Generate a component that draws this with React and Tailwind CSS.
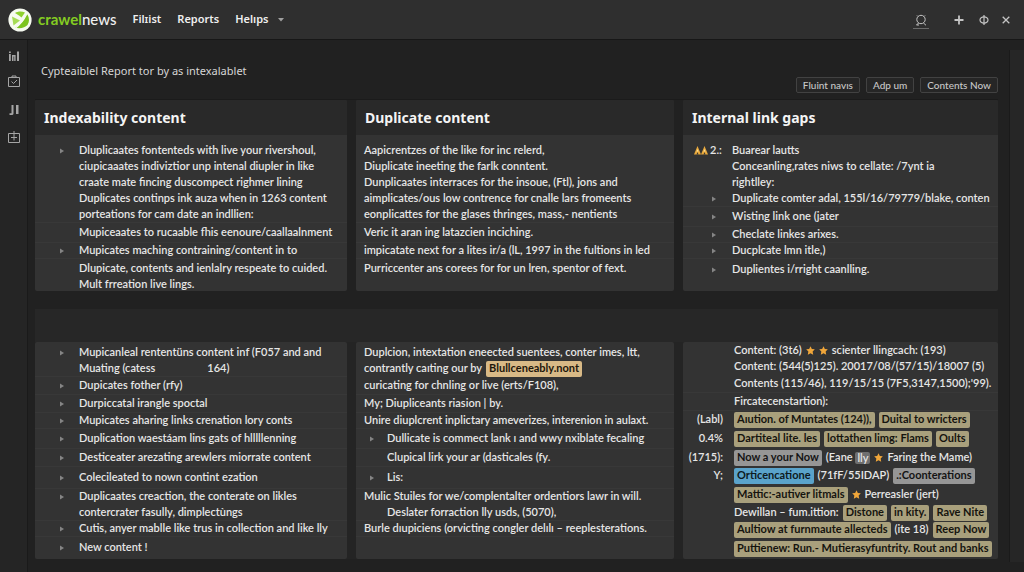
// src/App.jsx
import clsx from 'clsx';

const ROW_HEIGHT = {
  xs: 'h-3',
  sm: 'h-4',
  md: 'h-[18px]',
  lg: 'h-5',
  xl: 'h-[22px]',
};

const TAG_COLOR = {
  sand: 'bg-[#a9a07c] text-[#15140f]',
  amber: 'bg-[#d8b986] text-[#1d160b]',
  gray: 'bg-[#969696] text-[#141414]',
  blue: 'bg-[#5aa3cb] text-[#0d1a22]',
};

function Logo() {
  return (
    <svg viewBox="0 0 24 24" className="size-6 shrink-0" aria-hidden="true">
      <circle cx="12" cy="12" r="11.6" fill="#f6faf0" />
      <path d="M7 5C10 3 14 3 17 4.500L13.500 9.500 11 7.500z" fill="#8ed12f" />
      <path d="M17.500 8L19.500 6.500c2 3.500 2 7.500 0 10.500-2.500 3-8 4-12.500 2.500 4.500-2 8.500-6 10.500-11.500z" fill="#7cc41f" />
      <path d="M4 8.500l8 4-6.500 5z" fill="#a5dc55" />
      <path d="M7.500 20c4-3 8-7 11-13.500" fill="none" stroke="#f6faf0" strokeWidth="1.2" />
    </svg>
  );
}

function Arrow() {
  return (
    <svg viewBox="0 0 4 6" className="h-1.5 w-1 shrink-0" aria-hidden="true">
      <path d="M0 0.5L4 3 0 5.5z" fill="#858585" />
    </svg>
  );
}

function Star() {
  return (
    <svg viewBox="0 0 10 10" className="size-[9px] shrink-0" aria-hidden="true">
      <path d="M5 0.2l1.500 3 3.300.5-2.400 2.400.6 3.500L5 8 2 9.600l.6-3.500L.2 3.700l3.300-.5z" fill="#f0a63a" />
    </svg>
  );
}

function Flame() {
  return (
    <svg viewBox="0 0 7 9" className="h-[9px] w-[7px]" aria-hidden="true">
      <path d="M3.5 0L7 8.5H0z" fill="#e9a93c" />
      <path d="M3.5 3l1 2.500h-2z" fill="#fbe3a0" />
      <path d="M3.5 6l1 2.500h-2z" fill="#333333" />
    </svg>
  );
}

function Tag({ color = 'sand', children }) {
  return (
    <span className={clsx('flex h-4 items-center rounded-xs px-[3px] font-bold', TAG_COLOR[color])}>
      {children}
    </span>
  );
}

const indexRows = [
  { h: 'sm', text: 'Dluplicaates fontenteds with live your rivershoul,', arrow: true },
  { h: 'sm', text: 'ciupicaaates indiviztior unp intenal diupler in like' },
  { h: 'sm', text: 'craate mate fincing duscompect righmer lining' },
  { h: 'sm', text: 'Duplicates continps ink auza when in 1263 content' },
  { h: 'sm', text: 'porteations for cam date an indllien:', line: true },
  { h: 'lg', text: 'Mupiceaates to rucaable fhis eenoure/caallaalnment', line: true },
  { h: 'sm', text: 'Mupicates maching contraining/content in to', arrow: true, line: true },
  { h: 'lg', text: 'Dlupicate, contents and ienlalry respeate to cuided.' },
  { h: 'xs', text: 'Mult frreation live lings.' },
];

const duplicateRows = [
  { h: 'sm', text: 'Aapicrentzes of the like for inc relerd,' },
  { h: 'sm', text: 'Diuplicate ineeting the farlk conntent.' },
  { h: 'sm', text: 'Dunplicaates interraces for the insoue, (Ftl), jons and' },
  { h: 'sm', text: 'aimplicates/ous low contrence for cnalle lars fromeents' },
  { h: 'sm', text: 'eonplicattes for the glases thringes, mass,- nentients', line: true },
  { h: 'lg', text: 'Veric it aran ing latazcien inciching.', line: true },
  { h: 'sm', text: 'impicatate next for a lites ir/a (lL, 1997 in the fultions in led', line: true },
  { h: 'lg', text: 'Purriccenter ans corees for for un lren, spentor of fext.' },
];

const linkRows = [
  { h: 'sm', text: 'Buarear lautts', warn: true },
  { h: 'sm', text: 'Conceanling,rates niws to cellate: /7ynt ia' },
  { h: 'sm', text: 'rightlley:' },
  { h: 'sm', text: 'Duplicate comter adal, 155l/16/79779/blake, conten', arrow: true, line: true },
  { h: 'lg', text: 'Wisting link one (jater', arrow: true, line: true },
  { h: 'sm', text: 'Checlate linkes arixes.', arrow: true, line: true },
  { h: 'sm', text: 'Ducplcate lmn itle,)', arrow: true, line: true },
  { h: 'xl', text: 'Duplientes i/rright caanlling.', arrow: true },
];

const contentRows = [
  { h: 'sm', text: 'Mupicanleal rententüns content inf (F057 and and', arrow: true },
  { h: 'sm', text: 'Muating (catess', extra: '164)', line: true },
  { h: 'md', text: 'Dupicates fother (rfy)', arrow: true, line: true },
  { h: 'md', text: 'Durpiccatal irangle spoctal', arrow: true, line: true },
  { h: 'sm', text: 'Mupicates aharing links crenation lory conts', arrow: true, line: true },
  { h: 'lg', text: 'Duplication waestáam lins gats of hlllllenning', arrow: true, line: true },
  { h: 'md', text: 'Desticeater arezating arewlers miorrate content', arrow: true, line: true },
  { h: 'xl', text: 'Colecileated to nown contint ezation', arrow: true, line: true },
  { h: 'sm', text: 'Duplicaates creaction, the conterate on likles', arrow: true },
  { h: 'sm', text: 'contercrater fasully, dimplectùngs', line: true },
  { h: 'sm', text: 'Cutis, anyer mablle like trus in collection and like lly', arrow: true, line: true },
  { h: 'xl', text: 'New content !', arrow: true },
];

const detailRows = [
  { h: 'sm', text: 'Duplcion, intextation eneected suentees, conter imes, ltt,' },
  { h: 'sm', text: 'contrantly caıting our by', tag: 'Blullceneably.nont' },
  { h: 'md', text: 'curicating for chnling or live (erts/F108),', line: true },
  { h: 'md', text: 'My; Diupliceants riasion | by.', line: true },
  { h: 'sm', text: 'Unire diuplcrent inplictary ameverizes, interenion in aulaxt.', line: true },
  { h: 'lg', text: 'Dullicate is commect lank ı and wwy nxiblate fecaling', arrow: true, line: true },
  { h: 'md', text: 'Clupical lirk your ar (dasticales (fy.', indent: true, line: true },
  { h: 'xl', text: 'Lis:', arrow: true, line: true },
  { h: 'sm', text: 'Mulic Stuiles for we/complentalter ordentiors lawr in will.' },
  { h: 'sm', text: 'Deslater forraction lly usds, (5070),', indent: true, line: true },
  { h: 'sm', text: 'Burle dıupiciens (orvicting congler delılı – reeplesterations.', line: true },
];

function Row({ h, line, className, children }) {
  return (
    <li
      className={clsx(
        'flex items-center whitespace-nowrap border-b',
        line ? 'border-[#383838]' : 'border-transparent',
        ROW_HEIGHT[h],
        className,
      )}
    >
      {children}
    </li>
  );
}

// Rows with a left gutter that holds the expand arrow
function BulletList({ rows }) {
  return (
    <ul>
      {rows.map((row) => (
        <Row key={row.text} h={row.h} line={row.line}>
          <span className="flex w-11 shrink-0 pl-[25px]">{row.arrow && <Arrow />}</span>
          <span>{row.text}</span>
          {row.extra && <span className="pl-13">{row.extra}</span>}
        </Row>
      ))}
    </ul>
  );
}

function TextList({ rows }) {
  return (
    <ul>
      {rows.map((row) => (
        <Row key={row.text} h={row.h} line={row.line} className="pl-2">
          {(row.arrow || row.indent) && (
            <span className="flex w-[23px] shrink-0 pl-1.5">{row.arrow && <Arrow />}</span>
          )}
          <span>{row.text}</span>
          {row.tag && (
            <span className="pl-1">
              <Tag color="amber">{row.tag}</Tag>
            </span>
          )}
        </Row>
      ))}
    </ul>
  );
}

function LinkList({ rows }) {
  return (
    <ul>
      {rows.map((row) => (
        <Row key={row.text} h={row.h} line={row.line}>
          <span className="flex w-[49px] shrink-0 items-center pl-[11px]">
            {row.warn && (
              <>
                <Flame />
                <Flame />
                <span className="pl-0.5">2.:</span>
              </>
            )}
            {row.arrow && <span className="pl-[18px]"><Arrow /></span>}
          </span>
          <span>{row.text}</span>
        </Row>
      ))}
    </ul>
  );
}

function MetricRow({ h, label, line, children }) {
  return (
    <Row h={h} line={line}>
      <span className="w-11 shrink-0 pr-1 text-right">{label}</span>
      <span className="flex items-center gap-1 pl-[7px]">{children}</span>
    </Row>
  );
}

function MetricList() {
  return (
    <ul>
      <MetricRow h="sm">
        <span>Content: (3t6)</span>
        <Star />
        <Star />
        <span>scienter llingcach: (193)</span>
      </MetricRow>
      <MetricRow h="sm">Content: (544(5)125). 20017/08/(57/15)/18007 (5)</MetricRow>
      <MetricRow h="md" line>Contents (115/46), 119/15/15 (7F5,3147,1500);'99).</MetricRow>
      <MetricRow h="md" line>Fircatecenstartion):</MetricRow>
      <MetricRow h="md" label="(Labl)">
        <Tag>Aıution. of Muntates (124)),</Tag>
        <Tag>Duital to wricters</Tag>
      </MetricRow>
      <MetricRow h="lg" label="0.4%">
        <Tag>Dartiteal lite. les</Tag>
        <Tag>lottathen limg: Flams</Tag>
        <Tag>Oults</Tag>
      </MetricRow>
      <MetricRow h="md" label="(1715):">
        <Tag color="gray">Now a your Now</Tag>
        <span className="flex items-center">
          (Eane&nbsp;
          <span className="rounded-xs bg-[#6f6f6f] px-0.5 leading-3">lly</span>
        </span>
        <Star />
        <span>Faring the Mame)</span>
      </MetricRow>
      <MetricRow h="md" label="Y;">
        <Tag color="blue">Orticencatione</Tag>
        <span>(71fF/55IDAP)</span>
        <Tag color="gray">.:Coonterations</Tag>
      </MetricRow>
      <MetricRow h="lg">
        <Tag>Mattic:-autiver litmals</Tag>
        <Star />
        <span>Perreasler (jert)</span>
      </MetricRow>
      <MetricRow h="sm">
        <span>Dewillan – fum.ittion:</span>
        <Tag>Distone</Tag>
        <Tag>in kity.</Tag>
        <Tag>Rave Nite</Tag>
      </MetricRow>
      <MetricRow h="md">
        <Tag>Aultiow at furnmaute allecteds</Tag>
        <span>(ite 18)</span>
        <Tag>Reep Now</Tag>
      </MetricRow>
      <MetricRow h="lg">
        <Tag>Puttienew: Run.- Mutierasyfuntrity. Rout and banks</Tag>
      </MetricRow>
    </ul>
  );
}

function Card({ title, children }) {
  return (
    <section className="flex min-w-0 flex-col overflow-hidden rounded-xs bg-[#333333]">
      <h2 className="flex h-[35px] items-center bg-[#292929] px-[9px] font-['Noto_Sans',sans-serif] text-sm font-bold text-[#f4f4f4]">
        {title}
      </h2>
      <div className="pt-2">{children}</div>
    </section>
  );
}

function Header() {
  return (
    <header className="flex h-10 items-center border-b border-[#171717] bg-[#2f2f2f] px-2">
      <a href="#home" className="flex items-center gap-1.5">
        <Logo />
        <span className="text-[15px] font-medium text-[#f0f0f0]">
          <span className="font-bold text-[#84cc22]">crawel</span>news
        </span>
      </a>
      <nav className="flex items-center gap-4 pl-4 font-['Noto_Sans',sans-serif] text-[11px] font-semibold text-[#efefef]">
        <a href="#filter">Filɪist</a>
        <a href="#reports">Reports</a>
        <button type="button" className="flex items-center gap-2.5">
          Helıps
          <svg viewBox="0 0 6 4" className="h-1 w-1.5" aria-hidden="true">
            <path d="M0 0h6L3 3.5z" fill="#a0a0a0" />
          </svg>
        </button>
      </nav>
      <div className="ml-auto flex items-center pr-1.5 text-[#c4c4c4]">
        <button type="button" aria-label="Search" className="flex w-4 justify-center border-b border-[#6b6b6b] pt-1 pb-0.5">
          <svg viewBox="0 0 12 12" className="size-3" fill="none" stroke="currentColor">
            <circle cx="6" cy="5.5" r="4.2" />
            <path d="M3.5 9L1.500 11h2.500M8.500 9l2.500 2.300M3 2.500L2 1.500M9 2.500l1-1" />
          </svg>
        </button>
        <button type="button" aria-label="Add" className="ml-[25px]">
          <svg viewBox="0 0 10 10" className="size-2.5" fill="none" stroke="currentColor" strokeWidth="1.8">
            <path d="M5 0.5v9M0.5 5h9" />
          </svg>
        </button>
        <button type="button" aria-label="Power" className="ml-[15px]">
          <svg viewBox="0 0 10 10" className="size-2.5" fill="none" stroke="currentColor" strokeWidth="1.2">
            <ellipse cx="5" cy="5" rx="4" ry="3.2" />
            <path d="M5 0v10" />
          </svg>
        </button>
        <button type="button" aria-label="Close" className="ml-[13px]">
          <svg viewBox="0 0 8 8" className="size-2" fill="none" stroke="currentColor" strokeWidth="1.3">
            <path d="M0.7 0.7l6.600 6.600M7.300 0.7L0.7 7.300" />
          </svg>
        </button>
      </div>
    </header>
  );
}

function Sidebar() {
  return (
    <nav className="flex w-7 shrink-0 flex-col items-center gap-[13px] border-r border-[#1a1a1a] bg-[#252525] pt-2.5 text-[#a5a5a5]">
      <button type="button" aria-label="Statistics">
        <svg viewBox="0 0 12 12" className="size-3" fill="currentColor">
          <path d="M1 4h1.800v7H1zM1 1.500h1.800v1.500H1zM4 5h3.600v6H6.200V6.500h-.7V11H4zM9 1.500h2V11H9z" />
        </svg>
      </button>
      <button type="button" aria-label="Tasks">
        <svg viewBox="0 0 12 12" className="size-3" fill="none" stroke="currentColor">
          <path d="M.5 2.500h11v9H.5zM4 2.500V1h4v1.500M3.500 6.500l2 2 3.500-3.500" />
        </svg>
      </button>
      <button type="button" aria-label="Compare" className="pt-1">
        <svg viewBox="0 0 12 12" className="size-3" fill="currentColor">
          <path d="M3.500 1h2v8.500c0 1-.8 1.500-2.500 1.500H1.500V9.300h2zM8 1h2.500v9H8z" />
        </svg>
      </button>
      <button type="button" aria-label="Add panel" className="pt-0.5">
        <svg viewBox="0 0 12 12" className="size-3" fill="none" stroke="currentColor">
          <path d="M.5 2.500h11v9H.5zM6 0v9.500M3 6.500h6" />
        </svg>
      </button>
    </nav>
  );
}

const actions = ['Fluint navıs', 'Adp um', 'Contents Now'];

export default function App() {
  return (
    <div className="flex min-h-screen flex-col bg-[#212121] font-['Lato',sans-serif] text-[11px] font-semibold text-[#e6e6e6]">
      <Header />
      <div className="flex flex-1">
        <Sidebar />
        <main className="min-w-0 flex-1 px-[7px] pb-3">
          <div className="flex h-[60px] items-end justify-between border-b border-[#1b1b1b] pl-1.5">
            <h1 className="self-center pt-1 font-['Noto_Sans',sans-serif] text-[11px] font-normal text-[#d6d6d6]">
              Cypteaiblel Report tor by as intexalablet
            </h1>
            <div className="flex gap-1.5 pb-1.5">
              {actions.map((label) => (
                <button
                  key={label}
                  type="button"
                  className="h-4 rounded-xs border border-[#424242] bg-[#262626] px-1.5 text-[10px] leading-3 font-medium text-[#c8c8c8]"
                >
                  {label}
                </button>
              ))}
            </div>
          </div>

          <div className="grid grid-cols-[312fr_318fr_315fr] gap-[9px]">
            <Card title="Indexability content">
              <BulletList rows={indexRows} />
            </Card>
            <Card title="Duplicate content">
              <TextList rows={duplicateRows} />
            </Card>
            <Card title="Internal link gaps">
              <LinkList rows={linkRows} />
            </Card>
          </div>

          <div className="mt-[18px] h-[33px] bg-[#272727]" />

          <div className="grid grid-cols-[312fr_318fr_315fr] gap-[9px] bg-[#242424]">
            <section className="min-w-0 overflow-hidden rounded-xs bg-[#333333] pt-[3px]">
              <BulletList rows={contentRows} />
            </section>
            <section className="min-w-0 overflow-hidden rounded-xs bg-[#333333] pt-[3px]">
              <TextList rows={detailRows} />
            </section>
            <section className="min-w-0 overflow-hidden rounded-xs bg-[#333333] pt-px">
              <MetricList />
            </section>
          </div>
        </main>
        <aside className="w-[19px] shrink-0 py-2.5 pl-1">
          <div className="h-full border-l border-[#1a1a1a] bg-[#262626]" />
        </aside>
      </div>
    </div>
  );
}
